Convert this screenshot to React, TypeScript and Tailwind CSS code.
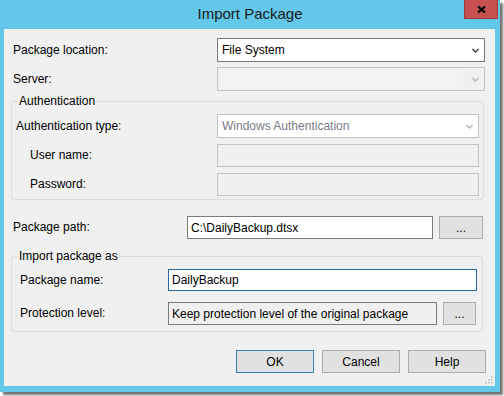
import React from 'react'

const FONT = { fontFamily: '"Liberation Sans", Arial, sans-serif' }

const Chevron = ({ disabled }: { disabled?: boolean }) => (
    <svg width="7" height="5" viewBox="0 0 7 5" className="shrink-0">
        <polyline points="0.5,1 3.5,4 6.5,1" fill="none" stroke={disabled ? '#b5b5b5' : '#3a3a3a'} strokeWidth="1.4" />
    </svg>
)

const Label = ({ children, w }: { children: React.ReactNode; w: string }) => (
    <div className={`${w} shrink-0 text-[12px] leading-[15px] text-black`}>{children}</div>
)

const DotsButton = ({ w }: { w: string }) => (
    <button className={`${w} h-[23px] shrink-0 border border-[#adadad] bg-[#e1e1e1] text-[12px] leading-[12px] text-black flex items-start justify-center pt-[5px]`}>
        ...
    </button>
)

export default function App() {
    return (
        <div className="w-[504px] h-[396px] bg-white" style={FONT}>
            <div className="w-[500px] h-[392px] bg-[#62c7e8] flex flex-col shadow-[3px_3px_2px_rgba(0,0,0,0.55)]">
                {/* title bar */}
                <div className="relative h-[29px] shrink-0 flex items-center justify-center">
                    <span className="text-[15px] leading-[18px] text-[#1a1a1a] mt-[-2px]">Import Package</span>
                    <div className="absolute right-[2px] top-0 w-[34px] h-[19px] bg-[#c75050] border border-[#9c3a3a] border-t-0 flex items-center justify-center">
                        <svg width="9" height="7" viewBox="0 0 9 7">
                            <path d="M1 0.5 L8 6.5 M8 0.5 L1 6.5" stroke="#000" strokeWidth="2.2" />
                        </svg>
                    </div>
                </div>

                {/* client area */}
                <div className="relative ml-[4px] mr-[5px] mb-[6px] flex-1 bg-[#f0f0f0] flex flex-col">
                    {/* Package location */}
                    <div className="flex items-center ml-[9px] mt-[9px] h-[24px]">
                        <Label w="w-[204px]">Package location:</Label>
                        <div className="w-[268px] h-[24px] border border-[#7a7a7a] bg-white flex items-center pl-[4px] pr-[5px]">
                            <span className="flex-1 text-[12px] text-black">File System</span>
                            <Chevron />
                        </div>
                    </div>

                    {/* Server */}
                    <div className="flex items-center ml-[9px] mt-[5px] h-[24px]">
                        <Label w="w-[204px]">Server:</Label>
                        <div className="w-[268px] h-[24px] border border-[#c3c3c3] bg-[#f0f0f0] flex items-center pl-[3px] pr-[5px]">
                            <div className="flex-1 h-[18px] bg-[#f3f3f3]" />
                            <span className="w-[7px] ml-[9px]"><Chevron disabled /></span>
                        </div>
                    </div>

                    {/* Authentication group */}
                    <fieldset className="ml-[7px] mt-[3px] w-[473px] border border-[#d8dde2] rounded-[3px] pb-[3px]">
                        <legend className="ml-[6px] px-[1px] text-[12px] leading-[15px] text-black">Authentication</legend>
                        <div className="flex items-center pl-[4px] mt-[5px] h-[24px]">
                            <Label w="w-[201px]">Authentication type:</Label>
                            <div className="w-[262px] h-[24px] border border-[#c3c3c3] bg-white flex items-center pl-[4px] pr-[5px]">
                                <span className="flex-1 text-[12px] text-[#7a7a86]">Windows Authentication</span>
                                <Chevron disabled />
                            </div>
                        </div>
                        <div className="flex items-center pl-[18px] mt-[6px] h-[23px]">
                            <Label w="w-[187px]">User name:</Label>
                            <div className="w-[262px] h-[23px] border border-[#c3c3c3] bg-[#f0f0f0]" />
                        </div>
                        <div className="flex items-center pl-[18px] mt-[6px] h-[23px]">
                            <Label w="w-[187px]">Password:</Label>
                            <div className="w-[262px] h-[23px] border border-[#c3c3c3] bg-[#f0f0f0]" />
                        </div>
                    </fieldset>

                    {/* Package path */}
                    <div className="flex items-center ml-[9px] mt-[16px] h-[23px]">
                        <Label w="w-[174px]">Package path:</Label>
                        <div className="w-[246px] h-[23px] border border-[#7a7a7a] bg-white flex items-center pl-[3px]">
                            <span className="text-[12px] text-black">C:\DailyBackup.dtsx</span>
                        </div>
                        <div className="ml-[6px]"><DotsButton w="w-[44px]" /></div>
                    </div>

                    {/* Import package as group */}
                    <fieldset className="ml-[7px] mt-[10px] w-[472px] border border-[#d8dde2] rounded-[3px] pb-[6px]">
                        <legend className="ml-[6px] px-[1px] text-[12px] leading-[15px] text-black">Import package as</legend>
                        <div className="flex items-center pl-[8px] mt-[5px] h-[22px]">
                            <Label w="w-[148px]">Package name:</Label>
                            <div className="w-[309px] h-[22px] border border-[#2b6a9c] bg-white flex items-center pl-[3px]">
                                <span className="text-[12px] text-black">DailyBackup</span>
                            </div>
                        </div>
                        <div className="flex items-center pl-[8px] mt-[11px] h-[23px]">
                            <Label w="w-[148px]">Protection level:</Label>
                            <div className="w-[269px] h-[23px] border border-[#7a7a7a] bg-[#f0f0f0] flex items-center pl-[3px]">
                                <span className="text-[12px] text-black">Keep protection level of the original package</span>
                            </div>
                            <div className="ml-[6px]"><DotsButton w="w-[33px]" /></div>
                        </div>
                    </fieldset>

                    {/* Buttons */}
                    <div className="flex justify-end gap-[8px] mt-[18px] mr-[9px]">
                        <button className="w-[78px] h-[23px] border border-[#3c7fb1] bg-[#e1e1e1] text-[12px] text-black">OK</button>
                        <button className="w-[78px] h-[23px] border border-[#adadad] bg-[#e1e1e1] text-[12px] text-black">Cancel</button>
                        <button className="w-[78px] h-[23px] border border-[#adadad] bg-[#e1e1e1] text-[12px] text-black">Help</button>
                    </div>

                    {/* size grip */}
                    <svg className="absolute right-[2px] bottom-[2px]" width="8" height="8" viewBox="0 0 8 8">
                        {[[6, 0], [6, 3], [3, 3], [6, 6], [3, 6], [0, 6]].map(([x, y], i) => (
                            <rect key={i} x={x} y={y} width="1.5" height="1.5" fill="#b8b8b8" />
                        ))}
                    </svg>
                </div>
            </div>
        </div>
    )
}
